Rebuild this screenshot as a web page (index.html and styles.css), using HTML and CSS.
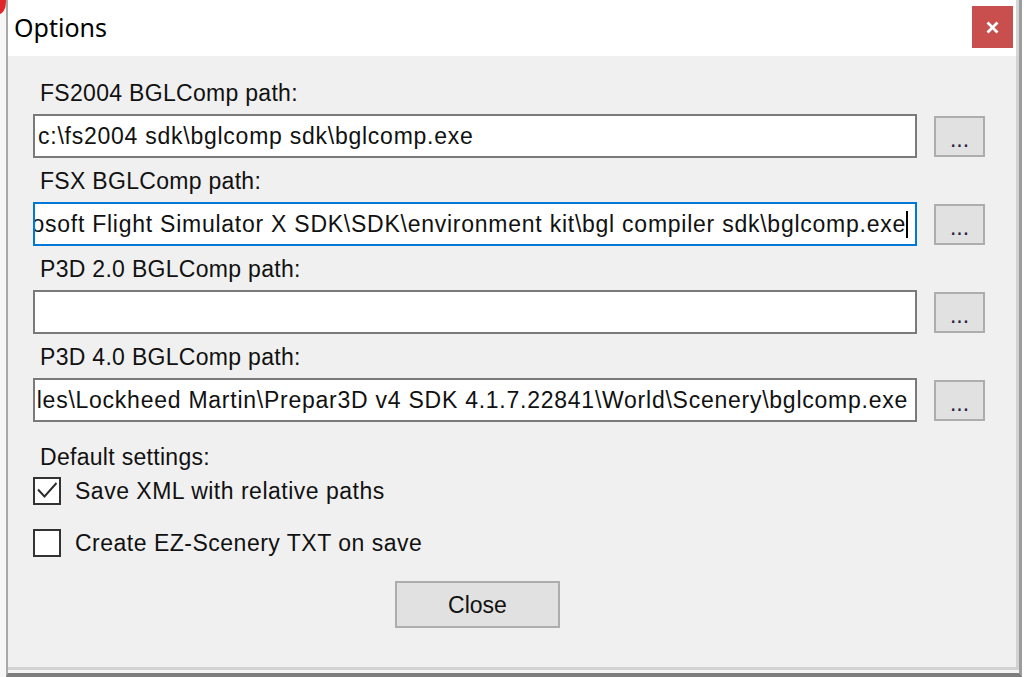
FILE: index.html
```html
<!DOCTYPE html>
<html>
<head>
<meta charset="utf-8">
<title>Options</title>
<link rel="stylesheet" href="styles.css">
</head>
<body>
<div class="page">
  <div class="bg-strip"><div class="bg-dot"></div></div>
  <div class="dialog">
    <div class="titlebar">
      <div class="title">Options</div>
      <div class="close-x">
        <svg width="13" height="13" viewBox="0 0 13 13"><path d="M1.5 1.5 L11.5 11.5 M11.5 1.5 L1.5 11.5" stroke="#ffffff" stroke-width="2.8" fill="none"/></svg>
      </div>
    </div>
    <div class="client">
      <div class="field">
        <div class="label">FS2004 BGLComp path:</div>
        <div class="row">
          <div class="textbox"><span class="value">c:\fs2004 sdk\bglcomp sdk\bglcomp.exe</span></div>
          <div class="browse">...</div>
        </div>
      </div>
      <div class="field">
        <div class="label">FSX BGLComp path:</div>
        <div class="row">
          <div class="textbox focused end"><span class="value">C:\Program Files (x86)\Microsoft Flight Simulator X SDK\SDK\environment kit\bgl compiler sdk\bglcomp.exe</span><span class="caret"></span></div>
          <div class="browse">...</div>
        </div>
      </div>
      <div class="field">
        <div class="label">P3D 2.0 BGLComp path:</div>
        <div class="row">
          <div class="textbox"><span class="value"></span></div>
          <div class="browse">...</div>
        </div>
      </div>
      <div class="field">
        <div class="label">P3D 4.0 BGLComp path:</div>
        <div class="row">
          <div class="textbox end"><span class="value">C:\Program Files\Lockheed Martin\Prepar3D v4 SDK 4.1.7.22841\World\Scenery\bglcomp.exe</span></div>
          <div class="browse">...</div>
        </div>
      </div>
      <div class="label section">Default settings:</div>
      <div class="check-row first">
        <span class="checkbox">
          <svg width="24" height="24" viewBox="0 0 24 24"><path d="M3 10.5 L9.5 17.5 L21.5 4" stroke="#2b2b2b" stroke-width="1.9" fill="none"/></svg>
        </span>
        <span class="check-label">Save XML with relative paths</span>
      </div>
      <div class="check-row">
        <span class="checkbox"></span>
        <span class="check-label">Create EZ-Scenery TXT on save</span>
      </div>
      <div class="actions">
        <div class="button">Close</div>
      </div>
    </div>
  </div>
</div>
</body>
</html>
```

FILE: styles.css
```css
html, body {
  margin: 0;
  padding: 0;
}
body {
  width: 1024px;
  height: 677px;
  overflow: hidden;
  background: #ffffff;
  font-family: "Liberation Sans", Arial, sans-serif;
  color: #111111;
}
.page {
  display: flex;
  width: 1024px;
  height: 677px;
}
.bg-strip {
  width: 6px;
  flex: none;
  overflow: hidden;
  background: #f7f7f7;
  display: flex;
  flex-direction: column;
}
.bg-dot {
  width: 14px;
  height: 24px;
  margin-top: -10px;
  margin-left: -8px;
  border-radius: 50%;
  background: #e0262b;
}
.dialog {
  width: 1016px;
  height: 677px;
  box-sizing: border-box;
  flex: none;
  display: flex;
  flex-direction: column;
  border-left: 2px solid #a9a9a9;
  border-right: 3px solid #9c9c9c;
  border-bottom: 4px solid #7e7e7e;
  padding-bottom: 3px;
  background: #f4f4f4;
}
.titlebar {
  height: 56px;
  flex: none;
  background: #ffffff;
  display: flex;
  align-items: flex-start;
  border-right: 3px solid #d6d6d6;
}
.title {
  font-family: "Noto Sans", "Open Sans", sans-serif;
  font-size: 25px;
  line-height: 25px;
  padding-top: 15px;
  padding-left: 6px;
  color: #000000;
}
.close-x {
  margin-left: auto;
  margin-right: 3px;
  margin-top: 6px;
  width: 41px;
  height: 42px;
  background: #c94e4e;
  display: flex;
  align-items: center;
  justify-content: center;
}
.client {
  flex: 1;
  background: #f0f0f0;
  padding: 24px 0 0 25px;
  border-right: 3px solid #d2d2d2;
  border-bottom: 3px solid #d2d2d2;
  display: flex;
  flex-direction: column;
}
.label {
  font-size: 23px;
  letter-spacing: 0.3px;
  line-height: 26px;
  height: 26px;
  margin-left: 7px;
  white-space: nowrap;
}
.field {
  display: flex;
  flex-direction: column;
  gap: 8px;
  margin-bottom: 10px;
}
.row {
  display: flex;
  align-items: center;
  gap: 17px;
}
.textbox {
  width: 884px;
  height: 44px;
  box-sizing: border-box;
  border: 2px solid #7a7a7a;
  background: #ffffff;
  display: flex;
  align-items: center;
  overflow: hidden;
  padding: 0 7px 0 3px;
  font-size: 23px;
  letter-spacing: 0.75px;
  white-space: nowrap;
}
.textbox.focused {
  border-color: #0078d7;
}
.textbox.end {
  justify-content: flex-end;
}
.value {
  flex: none;
}
.caret {
  flex: none;
  width: 2px;
  height: 27px;
  background: #000000;
}
.browse {
  width: 51px;
  height: 41px;
  box-sizing: border-box;
  border: 2px solid #adadad;
  background: #e1e1e1;
  display: flex;
  align-items: flex-end;
  justify-content: center;
  padding-bottom: 3px;
  font-size: 23px;
  line-height: 26px;
  color: #2a2240;
}
.label.section {
  margin-top: 12px;
}
.check-row {
  display: flex;
  align-items: center;
  gap: 14px;
  height: 28px;
  margin-top: 24px;
}
.check-row.first {
  margin-top: 7px;
}
.checkbox {
  width: 28px;
  height: 28px;
  box-sizing: border-box;
  border: 2px solid #333333;
  background: #ffffff;
  display: flex;
  align-items: center;
  justify-content: center;
  flex: none;
}
.check-label {
  font-size: 23px;
  letter-spacing: 0.5px;
  line-height: 26px;
  white-space: nowrap;
}
.actions {
  display: flex;
  margin-top: 24px;
  padding-left: 362px;
}
.button {
  width: 165px;
  height: 47px;
  box-sizing: border-box;
  border: 2px solid #adadad;
  background: #e1e1e1;
  display: flex;
  align-items: center;
  justify-content: center;
  font-size: 23px;
  line-height: 26px;
}
```
